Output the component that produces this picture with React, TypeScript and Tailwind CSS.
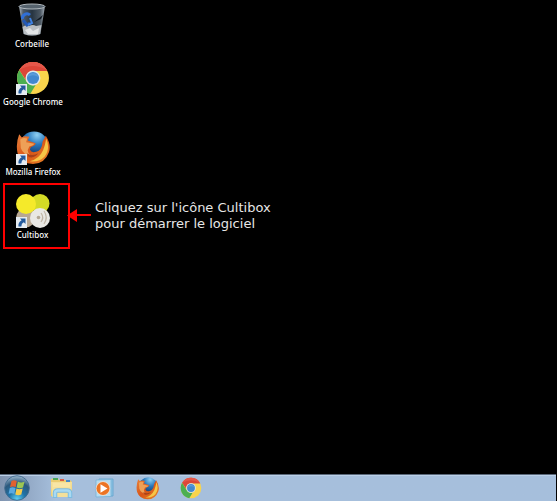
import type { ReactNode } from "react";

type IconProps = { className?: string };

function RecycleBin({ className }: IconProps) {
  return (
    <svg viewBox="2 0 28 34" className={className} aria-hidden="true">
      <defs>
        <linearGradient id="bin" x1="0" x2="1" y1="0" y2="0">
          <stop offset="0" stopColor="#aeb8c2" />
          <stop offset="0.16" stopColor="#4e5b68" />
          <stop offset="0.5" stopColor="#263441" />
          <stop offset="0.82" stopColor="#4c5863" />
          <stop offset="1" stopColor="#a4adb6" />
        </linearGradient>
      </defs>
      <path d="M3 3 L29 3 L24.500 31 Q16 34.500 7.500 31 Z" fill="url(#bin)" />
      <path d="M6.500 24 Q10 21 13 23 Q17 21 20 23 L25.500 22 L24.200 31 Q16 34 7.800 31 Z" fill="#b9bec2" />
      <path d="M9 27 L14 25 L17 28 L23 25 L22 31 L12 31 Z" fill="#e2e4e6" />
      <path d="M27 12 L18 19 L25 16 Z" fill="#101820" />
      <ellipse cx="16" cy="3.500" rx="13" ry="2.500" fill="#56636e" stroke="#b0b8be" strokeWidth="1" />
      <path d="M14 12 A4.500 4.500 0 0 0 6.500 16" fill="none" stroke="#2f6fd6" strokeWidth="3" />
      <path d="M7 17 L11 22 L14 20" fill="none" stroke="#2459b5" strokeWidth="3" />
      <path d="M14 15 L16 20 L12 22" fill="none" stroke="#3f82e4" strokeWidth="2" />
    </svg>
  );
}

function ChromeLogo({ className }: IconProps) {
  return (
    <svg viewBox="0 0 32 32" className={className} aria-hidden="true">
      <circle cx="16" cy="16" r="15" fill="#f9d44c" />
      <path d="M3 8.500 A15 15 0 0 1 29.500 9.500 L16 9.500 A6.500 6.500 0 0 0 10 19 Z" fill="#dc4638" />
      <path d="M3 8.500 L10 19.500 A7 7 0 0 0 18.500 22.500 L13.500 30.800 A15 15 0 0 1 3 8.500 Z" fill="#4caf50" />
      <path d="M3 8.500 A15 15 0 0 1 29 8.500 Q16 1 3 8.500 Z" fill="#e4574a" />
      <circle cx="16" cy="16" r="7" fill="#dfe8ee" />
      <circle cx="16" cy="16" r="5.700" fill="#4288cf" />
      <path d="M11 15 A5.200 5.200 0 0 1 21 15 Q16 12 11 15" fill="#5a9bd9" />
    </svg>
  );
}

function FirefoxLogo({ className }: IconProps) {
  return (
    <svg viewBox="0 0 32 32" className={className} aria-hidden="true">
      <defs>
        <radialGradient id="globe" cx="0.6" cy="0.12" r="0.75">
          <stop offset="0" stopColor="#8fd0f2" />
          <stop offset="0.45" stopColor="#2878bd" />
          <stop offset="1" stopColor="#102d60" />
        </radialGradient>
        <linearGradient id="fox" x1="0" x2="1" y1="0" y2="1">
          <stop offset="0" stopColor="#e8803a" />
          <stop offset="0.5" stopColor="#d85518" />
          <stop offset="1" stopColor="#e98a2a" />
        </linearGradient>
      </defs>
      <circle cx="17" cy="14" r="13.500" fill="url(#globe)" />
      <path d="M3 3 L5.500 6 Q8 4 12.500 5.500 L11 9 L18.500 11.500 Q18 14 14 15 L13 17.500 Q14.500 21 19 19.500 Q24.500 18 25 10 L28 4.500 Q33.500 13 31 20 Q27 31 16 31 Q5 31 1.500 21 Q-0.500 12 3 3 Z" fill="url(#fox)" />
      <path d="M4 8 Q7 6 10.500 7 L9.500 10.500 L17.500 12 Q16 14 12.500 14.500 L11 18 Q11 21 14 23 Q7 23 4.500 16 Z" fill="#eea057" />
      <path d="M28.500 7 Q32.500 17 27 24 Q22 29.500 13 28.500 Q22 26 25.500 18 Q27.500 13 28.500 7 Z" fill="#f6c647" />
      <path d="M10 21 Q15 24 21 21 Q17.500 26 12 24.500 Z" fill="#a8401a" />
    </svg>
  );
}

function CultiboxLogo({ className }: IconProps) {
  return (
    <svg viewBox="0 0 34 34" className={className} aria-hidden="true">
      <circle cx="24" cy="9.500" r="9.500" fill="#d3da25" />
      <circle cx="9.500" cy="24" r="9.500" fill="#b8a792" />
      <path d="M14 17 H22 V24 H14 Z" fill="#b8a792" />
      <circle cx="24" cy="24" r="10" fill="#e9e8e4" />
      <circle cx="10" cy="10" r="10" fill="#f5ea2a" />
      <circle cx="22.500" cy="23.500" r="1.800" fill="#b3a794" />
      <path d="M25 19 Q28.500 23.500 25 28 M28 17 Q32.500 23.500 28 30" fill="none" stroke="#c0b6a6" strokeWidth="1.200" />
    </svg>
  );
}

function ShortcutArrow() {
  return (
    <svg viewBox="0 0 11 11" className="absolute bottom-0 left-0 size-[11px]" aria-hidden="true">
      <path d="M0 0 H11 V11 H0 Z" fill="#e5ebf1" />
      <path d="M4 1.500 H9.500 V7 L7.800 5.300 Q5.300 6.300 5.300 9.500 H2.500 Q1.800 5.500 5.600 3.200 Z" fill="#245a9c" />
    </svg>
  );
}

function StartOrb({ className }: IconProps) {
  return (
    <svg viewBox="0 0 26 26" className={className} aria-hidden="true">
      <defs>
        <radialGradient id="orb" cx="0.5" cy="0.95" r="0.95">
          <stop offset="0" stopColor="#5fd2f5" />
          <stop offset="0.35" stopColor="#1f74a8" />
          <stop offset="0.7" stopColor="#2c587c" />
          <stop offset="1" stopColor="#9fbacf" />
        </radialGradient>
      </defs>
      <circle cx="13" cy="13" r="12.300" fill="url(#orb)" stroke="#3f6a8e" strokeWidth="0.900" />
      <path d="M7.500 6 Q10 4.500 12.800 6 L11.700 12 Q9 10.800 6 12 Z" fill="#e2602f" />
      <path d="M13.800 6.500 Q16.500 8.400 20.500 6.800 L19 12.500 Q15.500 13.800 12.700 12.400 Z" fill="#9cc653" />
      <path d="M5.800 13 Q8.500 11.700 11.500 13.100 L10.300 19 Q7.500 17.500 4.600 18.800 Z" fill="#5aa9e2" />
      <path d="M12.500 13.500 Q15.200 14.800 18.700 13.500 L17.300 19.500 Q14 20.800 11.300 19.400 Z" fill="#f5cb4a" />
    </svg>
  );
}

function ExplorerFolder({ className }: IconProps) {
  return (
    <svg viewBox="0 0 24 24" className={className} aria-hidden="true">
      <path d="M1 3 L8 2 L9 4 L20 4 L22 6 V20 H1 Z" fill="#eccd70" />
      <path d="M3 2 H8 V4 H3 Z" fill="#49a65a" />
      <path d="M10 3 H14 V5 H10 Z" fill="#d65e48" />
      <path d="M16 4 H20 V6 H16 Z" fill="#4388c9" />
      <path d="M1 6 H22 L21 21 H2 Z" fill="#f5e09a" />
      <path d="M3 8 H20 M3 10 H20" stroke="#fbeab0" strokeWidth="1" />
      <path d="M5 22 V17 Q5 14.500 8 14.500 H17 Q20 14.500 20 17 V22" fill="none" stroke="#7dbbe0" strokeWidth="4.500" />
      <path d="M5 21 V17 Q5 14.500 8 14.500 H17 Q20 14.500 20 17 V21" fill="none" stroke="#a9daf2" strokeWidth="2.500" />
    </svg>
  );
}

function MediaPlayer({ className }: IconProps) {
  return (
    <svg viewBox="0 0 20 20" className={className} aria-hidden="true">
      <path d="M4 1 H18 V18 H5 Z" fill="#8cc3e4" stroke="#6ba8d0" />
      <path d="M1 2 L16 1.500 V18.500 L1 19 Z" fill="#b7dcf0" stroke="#78b1d6" strokeWidth="0.800" />
      <circle cx="8" cy="10.500" r="7.200" fill="#f5dcc6" />
      <circle cx="8" cy="10.500" r="6.500" fill="#ec7424" />
      <path d="M5.500 6.300 L12.500 10.500 L5.500 14.700 Z" fill="#ffffff" />
    </svg>
  );
}

function DesktopIcon({ label, children }: { label: string; children: ReactNode }) {
  return (
    <button type="button" className="flex w-full flex-col items-center gap-0.5 whitespace-nowrap text-[8px] leading-[10px] font-medium text-white">
      <span className="relative">{children}</span>
      <span>{label}</span>
    </button>
  );
}

function TaskButton({ label, children }: { label: string; children: ReactNode }) {
  return (
    <button type="button" aria-label={label} className="flex h-full w-[43px] items-center justify-center">
      {children}
    </button>
  );
}

export default function App() {
  return (
    <div className="flex min-h-screen flex-col bg-black font-['Noto_Sans',sans-serif]">
      <main className="flex-1 pt-[3px]">
        <div className="flex w-[66px] flex-col">
          <div className="pr-0.5">
            <DesktopIcon label="Corbeille">
              <RecycleBin className="h-[34px] w-7" />
            </DesktopIcon>
          </div>
          <div className="pt-3">
            <DesktopIcon label="Google Chrome">
              <ChromeLogo className="size-[34px]" />
              <ShortcutArrow />
            </DesktopIcon>
          </div>
          <div className="pt-6">
            <DesktopIcon label="Mozilla Firefox">
              <FirefoxLogo className="size-[34px]" />
              <ShortcutArrow />
            </DesktopIcon>
          </div>
        </div>
        <div className="flex items-center pt-[6px] pl-[3px]">
          <div className="h-[66px] w-[67px] shrink-0 border-2 border-[#ff0000] pt-[9px] pr-2">
            <DesktopIcon label="Cultibox">
              <CultiboxLogo className="size-[34px]" />
              <ShortcutArrow />
            </DesktopIcon>
          </div>
          <svg viewBox="0 0 24 14" className="-ml-[3px] h-[14px] w-6 shrink-0" aria-hidden="true">
            <path d="M0 6.500 L10 0 V5 H24 V7 H10 V13 Z" fill="#ff0000" />
          </svg>
          <p className="pl-1 font-['DejaVu_Sans',sans-serif] text-[13px] leading-4 text-[#e6e6e6]">
            Cliquez sur l'icône Cultibox
            <br />
            pour démarrer le logiciel
          </p>
        </div>
      </main>
      <nav aria-label="Taskbar" className="mr-px flex h-[27px] items-center border-t border-[#596779] bg-[#a6bfdc] bg-linear-to-r from-[#8094b0] via-[#a6bfdc] via-10% to-[#a6bfdc] shadow-[inset_0_1px_0_#bbd0e7]">
        <button type="button" aria-label="Start" className="flex h-full w-10 items-center pl-1">
          <StartOrb className="size-[26px]" />
        </button>
        <TaskButton label="Explorer">
          <ExplorerFolder className="size-6" />
        </TaskButton>
        <TaskButton label="Media Player">
          <MediaPlayer className="size-5" />
        </TaskButton>
        <TaskButton label="Mozilla Firefox">
          <FirefoxLogo className="size-[23px]" />
        </TaskButton>
        <TaskButton label="Google Chrome">
          <ChromeLogo className="size-[22px]" />
        </TaskButton>
      </nav>
    </div>
  );
}
